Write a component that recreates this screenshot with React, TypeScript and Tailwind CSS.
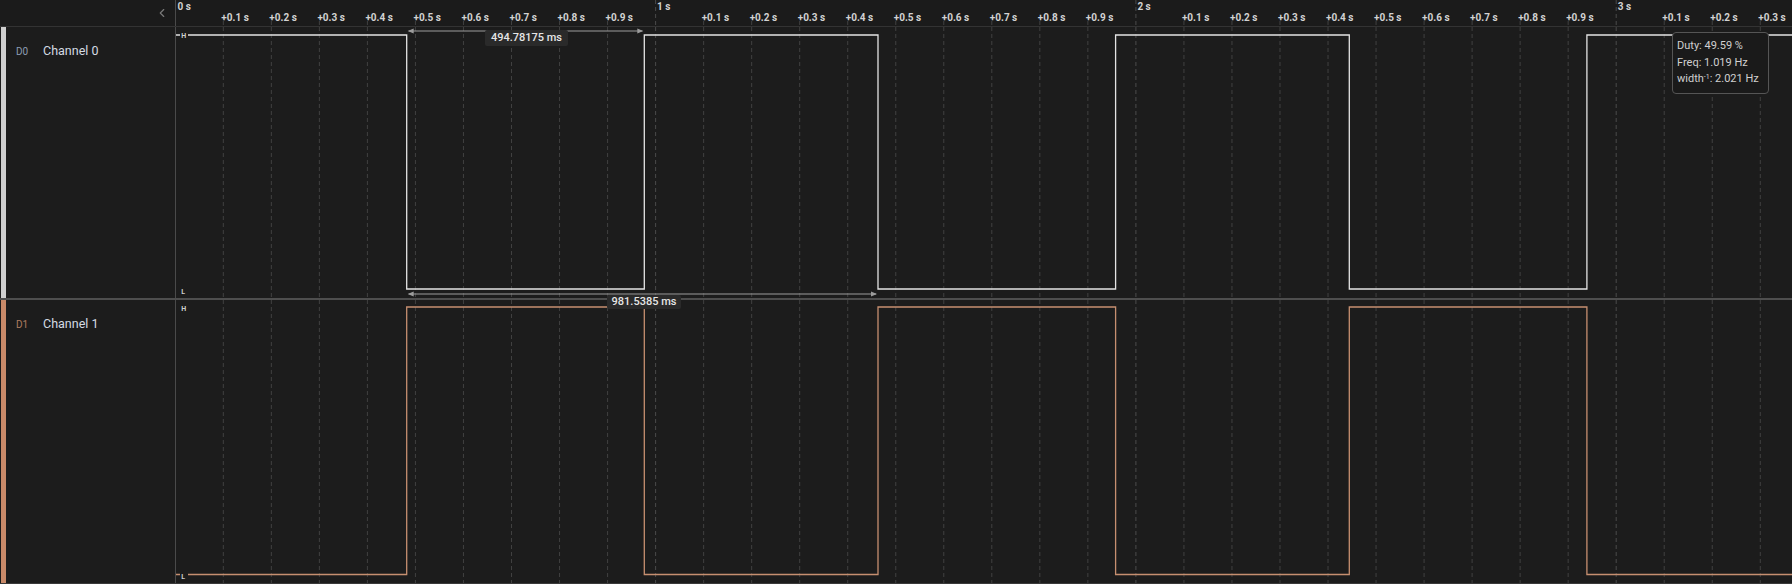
import { ChevronLeft } from "lucide-react";

const PX_PER_S = 480.3;
const ZERO_X = 175.3;
const LEFT = 176; // waveform area starts here (page x)
const AREA_W = 1792 - LEFT;

const EDGES = [406.7, 644.3, 878.0, 1115.6, 1349.3, 1586.9].map((e) => e - LEFT);

const lx = (t: number) => ZERO_X + t * PX_PER_S - LEFT;

const ticks: { t: number; major: boolean }[] = [];
for (let i = 1; i <= 33; i++) ticks.push({ t: i / 10, major: i % 10 === 0 });

function tickLabel(i: number) {
  const t = ticks[i];
  if (t.major) return `${Math.round(t.t)} s`;
  return `+0.${Math.round(t.t * 10) % 10} s`;
}

function Grid({ height, header }: { height: number; header?: boolean }) {
  return (
    <g>
      {ticks.map((tk) => (
        <line
          key={tk.t}
          x1={lx(tk.t)}
          x2={lx(tk.t)}
          y1={header && !tk.major ? 21 : 0}
          y2={height}
          stroke={tk.major ? "#4a4a4a" : "#404040"}
          strokeWidth={1}
          strokeDasharray="4 3"
        />
      ))}
    </g>
  );
}

function wave(high: number, low: number, startHigh: boolean) {
  let d = `M 0 ${startHigh ? high : low}`;
  let lvl = startHigh;
  for (const e of EDGES) {
    lvl = !lvl;
    d += ` H ${e} V ${lvl ? high : low}`;
  }
  return d + ` H ${AREA_W}`;
}

function LevelTag({ y, text }: { y: number; text: string }) {
  return (
    <g>
      <rect x={4} y={y - 4} width={8} height={8} fill="#1c1c1c" />
      <text x={5.2} y={y + 2.6} fontSize={7} fontWeight={700} fill="#cfcfcf" fontFamily="Roboto, sans-serif">
        {text}
      </text>
    </g>
  );
}

function Arrow({ y, x1, x2 }: { y: number; x1: number; x2: number }) {
  return (
    <g fill="#9c9c9c">
      <line x1={x1 + 2} x2={x2 - 2} y1={y} y2={y} stroke="#9c9c9c" strokeWidth={1.2} />
      <polygon points={`${x1 + 1},${y} ${x1 + 7},${y - 2.5} ${x1 + 7},${y + 2.5}`} />
      <polygon points={`${x2 - 1},${y} ${x2 - 7},${y - 2.5} ${x2 - 7},${y + 2.5}`} />
    </g>
  );
}

function ChannelLabel({ id, name, bar, idColor }: { id: string; name: string; bar: string; idColor: string }) {
  return (
    <div className="flex w-[176px] shrink-0 border-r border-[#4a4a4a]">
      <div className="ml-[1px] w-[5px]" style={{ background: bar }} />
      <div className="flex items-baseline pl-[10px] pt-[15px] font-['Roboto',sans-serif]">
        <span className="w-[27px] text-[10px]" style={{ color: idColor }}>
          {id}
        </span>
        <span className="text-[12.5px] text-[#d5dbe3]">{name}</span>
      </div>
    </div>
  );
}

export default function App() {
  return (
    <div className="relative h-[584px] w-[1792px] overflow-hidden bg-[#1c1c1c] font-['Roboto',sans-serif]">
      {/* time axis */}
      <div className="flex h-[27px] border-b border-[#333333] bg-[#1b1b1b]">
        <div className="flex w-[176px] shrink-0 justify-end border-r border-[#4a4a4a] pr-[6px] pt-[6px]">
          <ChevronLeft size={14} strokeWidth={2} className="text-[#7a7a7a]" />
        </div>
        <svg width={AREA_W} height={26} className="block">
          <Grid height={26} header />
          <text x={1.5} y={10} fontSize={10} fontWeight={700} fill="#d2d2d2">
            0 s
          </text>
          {ticks.map((tk, i) => (
            <text
              key={tk.t}
              x={tk.major ? lx(tk.t) + 1.5 : lx(tk.t) - 2}
              y={tk.major ? 10 : 20.5}
              fontSize={10}
              fontWeight={700}
              fill="#d2d2d2"
            >
              {tickLabel(i)}
            </text>
          ))}
        </svg>
      </div>

      {/* channel 0 */}
      <div className="flex h-[273px] border-b-2 border-[#4e4e4e]">
        <ChannelLabel id="D0" name="Channel 0" bar="#cfcfcf" idColor="#8c9db3" />
        <svg width={AREA_W} height={271} className="block">
          <Grid height={271} />
          <path d={wave(8, 262, true)} fill="none" stroke="#e4e4e4" strokeWidth={1.3} />
          <LevelTag y={8} text="H" />
          <LevelTag y={264} text="L" />
          <Arrow y={4} x1={EDGES[0]} x2={EDGES[1]} />
          <Arrow y={267} x1={EDGES[0]} x2={EDGES[2]} />
        </svg>
      </div>

      {/* channel 1 */}
      <div className="flex h-[284px] border-b border-[#3a3a3a]">
        <ChannelLabel id="D1" name="Channel 1" bar="#c98a69" idColor="#b07c60" />
        <svg width={AREA_W} height={283} className="block">
          <Grid height={283} />
          <path d={wave(7, 274.5, false)} fill="none" stroke="#c68f70" strokeWidth={1.3} />
          <LevelTag y={8} text="H" />
          <LevelTag y={276} text="L" />
        </svg>
      </div>

      {/* measurement labels */}
      <div className="absolute left-[485px] top-[30px] flex h-[16px] w-[83px] items-center justify-center rounded-[2px] bg-[#2a2a2a] text-[11px] font-medium text-[#e6e6e6]">
        494.78175 ms
      </div>
      <div className="absolute left-[607px] top-[295px] flex h-[14px] w-[74px] items-center justify-center rounded-[2px] bg-[#2a2a2a] text-[11px] font-medium text-[#e6e6e6]">
        981.5385 ms
      </div>

      {/* pulse stats tooltip */}
      <div className="absolute left-[1672px] top-[32px] w-[97px] rounded-[4px] border border-[#555555] bg-[#1a1a1a] px-[4px] py-[5px] text-[11px] leading-[16.7px] text-[#d0d0d0]">
        <div>Duty: 49.59 %</div>
        <div>Freq: 1.019 Hz</div>
        <div>
          width<sup className="text-[7px]">-1</sup>: 2.021 Hz
        </div>
      </div>
    </div>
  );
}
